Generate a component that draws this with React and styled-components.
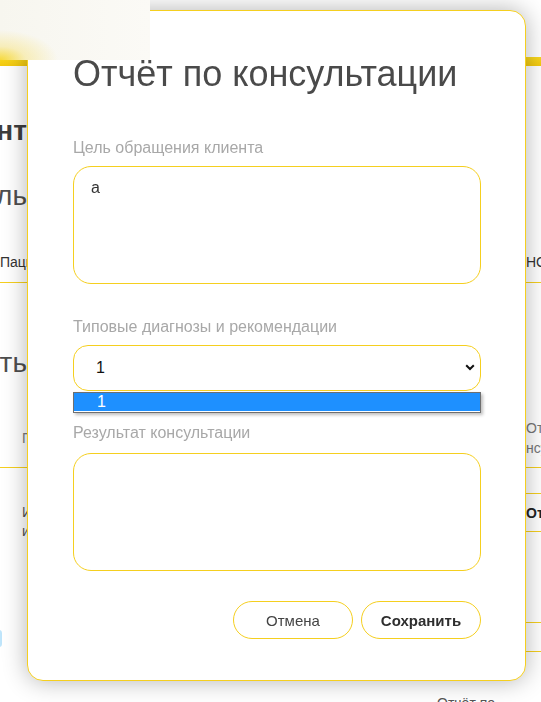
import React from "react";
import styled, { createGlobalStyle } from "styled-components";

const YELLOW = "#f5cf1f";

const GlobalStyle = createGlobalStyle`
  html, body { margin: 0; padding: 0; background: #fff; }
  body {
    font-family: "Liberation Sans", Arial, sans-serif;
    width: 541px;
    height: 702px;
    overflow: hidden;
  }
  * { box-sizing: border-box; }
`;

/* ---------- background page ---------- */

const Page = styled.div`
  width: 541px;
  height: 702px;
  overflow: hidden;
  background: #fff;
  display: flex;
  flex-direction: column;
`;

const Header = styled.header`
  display: flex;
  flex-direction: column;
  flex: none;
`;

const HeaderTop = styled.div`
  height: 57px;
  display: flex;
  align-items: flex-start;
`;

const Logo = styled.div`
  position: relative;
  z-index: 30;
  width: 150px;
  height: 60px;
  flex: none;
  background:
    radial-gradient(ellipse 58px 30px at 0% 100%, rgba(246, 214, 40, 0.9) 0%, rgba(247, 226, 120, 0.45) 45%, rgba(249, 246, 236, 0) 100%),
    linear-gradient(90deg, #f7f6ef 0%, #fbfaf6 100%);
`;

const HeaderBar = styled.div`
  height: 9px;
  background: linear-gradient(180deg, #f9d81f 0%, #f3c90e 100%);
`;

const BgRow = styled.div`
  flex: none;
  display: flex;
  justify-content: space-between;
  height: ${(p) => p.$h}px;
  margin-top: ${(p) => p.$mt || 0}px;
  border-bottom: ${(p) => (p.$line ? `1px solid ${YELLOW}` : "none")};
`;

const LeftCell = styled.div`
  width: 27px;
  flex: none;
  overflow: hidden;
  white-space: nowrap;
  display: flex;
  flex-direction: column;
  align-items: ${(p) => (p.$end ? "flex-end" : "flex-start")};
  padding-left: ${(p) => p.$pl || 0}px;
  padding-top: ${(p) => p.$pt || 0}px;
`;

const RightCell = styled.div`
  width: 15px;
  flex: none;
  overflow: hidden;
  white-space: nowrap;
  display: flex;
  flex-direction: column;
  padding-top: ${(p) => p.$pt || 0}px;
`;

const Heading = styled.div`
  font-size: 28px;
  line-height: 32px;
  font-weight: ${(p) => (p.$bold ? 700 : 400)};
  color: ${(p) => (p.$bold ? "#3d3d3d" : "#4e4e4e")};
`;

const BgText = styled.div`
  font-size: 14px;
  line-height: ${(p) => p.$lh || 16}px;
  font-weight: ${(p) => (p.$bold ? 700 : 400)};
  color: ${(p) => p.$color || "#333"};
`;

const TableBody = styled.div`
  flex: none;
  display: flex;
  justify-content: space-between;
`;

const Stack = styled.div`
  width: ${(p) => p.$w}px;
  flex: none;
  overflow: hidden;
  display: flex;
  flex-direction: column;
  padding-left: ${(p) => p.$pl || 0}px;
  padding-top: ${(p) => p.$pt || 0}px;
  white-space: nowrap;
`;

const StackRow = styled.div`
  height: ${(p) => p.$h}px;
  flex: none;
  display: flex;
  align-items: center;
  border-bottom: 1px solid ${YELLOW};
`;

const Tag = styled.div`
  margin-top: 89px;
  margin-left: -84px;
  width: 64px;
  height: 17px;
  flex: none;
  border-radius: 3px;
  background: #bfe5fb;
`;

const FooterText = styled.div`
  flex: none;
  margin-top: 43px;
  padding-left: 437px;
  font-size: 14px;
  line-height: 16px;
  color: #555;
  white-space: nowrap;
`;

/* ---------- modal ---------- */

const Modal = styled.div`
  position: fixed;
  left: 27px;
  top: 10px;
  z-index: 10;
  width: 499px;
  background: #fff;
  border: 1px solid ${YELLOW};
  border-radius: 16px;
  box-shadow: 0 0 24px rgba(0, 0, 0, 0.3);
  padding: 42px 44px 41px 45px;
  display: flex;
  flex-direction: column;
`;

const Title = styled.h2`
  margin: 0;
  font-size: 36px;
  line-height: 41px;
  font-weight: 400;
  color: #4a4a4a;
  white-space: nowrap;
`;

const Field = styled.div`
  display: flex;
  flex-direction: column;
  margin-top: ${(p) => p.$mt}px;
`;

const Label = styled.label`
  font-size: 16px;
  line-height: 18px;
  color: #a8a8a8;
  margin-bottom: ${(p) => p.$mb || 9}px;
`;

const TextArea = styled.textarea`
  width: 100%;
  height: 118px;
  border: 1px solid ${YELLOW};
  border-radius: 18px;
  padding: 11px 17px;
  font-family: "Liberation Sans", Arial, sans-serif;
  font-size: 16px;
  line-height: 19px;
  color: #333;
  resize: none;
  outline: none;
  background: #fff;
`;

const SelectWrap = styled.div`
  position: relative;
`;

const Select = styled.div`
  height: 46px;
  border: 1px solid ${YELLOW};
  border-radius: 15px;
  padding: 0 22px;
  display: flex;
  align-items: center;
  font-size: 16px;
  color: #111;
  background: #fff;
`;

const Chevron = styled.svg`
  position: absolute;
  right: 6px;
  top: 19px;
  width: 10px;
  height: 7px;
`;

const ListBox = styled.div`
  position: absolute;
  left: 0;
  right: 0;
  top: 47px;
  z-index: 5;
  background: #fff;
  border: 1px solid #6f6f6f;
  padding-bottom: 1px;
  box-shadow: 2px 2px 3px rgba(0, 0, 0, 0.25);
`;

const Option = styled.div`
  height: 18px;
  line-height: 18px;
  padding-left: 23px;
  font-size: 16px;
  color: #fff;
  background: #1e90ff;
`;

const Buttons = styled.div`
  display: flex;
  justify-content: flex-end;
  gap: 8px;
  margin-top: 30px;
`;

const Button = styled.button`
  width: 120px;
  height: 38px;
  border: 1px solid ${YELLOW};
  border-radius: 19px;
  background: #fff;
  font-family: "Liberation Sans", Arial, sans-serif;
  font-size: 15px;
  font-weight: ${(p) => (p.$primary ? 700 : 400)};
  color: ${(p) => (p.$primary ? "#2e2e2e" : "#444")};
  padding: 0;
  cursor: pointer;
`;

export default function App() {
  return (
    <>
      <GlobalStyle />
      <Page>
        <Header>
          <HeaderTop>
            <Logo />
          </HeaderTop>
          <HeaderBar />
        </Header>

        <BgRow $h={32} $mt={49}>
          <LeftCell $end>
            <Heading $bold>Консультант</Heading>
          </LeftCell>
        </BgRow>
        <BgRow $h={32} $mt={33}>
          <LeftCell $end>
            <Heading>Профиль</Heading>
          </LeftCell>
        </BgRow>
        <BgRow $h={29} $mt={42} $line>
          <LeftCell>
            <BgText>Пациенты</BgText>
          </LeftCell>
          <RightCell>
            <BgText>НС</BgText>
          </RightCell>
        </BgRow>
        <BgRow $h={32} $mt={64}>
          <LeftCell $end>
            <Heading>Отчётность</Heading>
          </LeftCell>
        </BgRow>
        <BgRow $h={53} $mt={36} $line>
          <LeftCell $pl={22} $pt={15}>
            <BgText $color="#7a7a7a">Пациент</BgText>
          </LeftCell>
          <RightCell $pt={3}>
            <BgText $color="#777" $lh={20}>Отчёт</BgText>
            <BgText $color="#777" $lh={20}>нсультации</BgText>
          </RightCell>
        </BgRow>

        <TableBody>
          <Stack $w={27} $pl={22} $pt={35}>
            <BgText $lh={19} $color="#555">Иванова</BgText>
            <BgText $lh={19} $color="#555">ирина</BgText>
            <Tag />
          </Stack>
          <Stack $w={15}>
            <StackRow $h={26} />
            <StackRow $h={38}>
              <BgText $bold $color="#222">Отчёт</BgText>
            </StackRow>
            <StackRow $h={91} />
            <StackRow $h={29} />
          </Stack>
        </TableBody>

        <FooterText>Отчёт по</FooterText>
      </Page>

      <Modal>
        <Title>Отчёт по консультации</Title>

        <Field $mt={45}>
          <Label>Цель обращения клиента</Label>
          <TextArea defaultValue="а" />
        </Field>

        <Field $mt={34}>
          <Label>Типовые диагнозы и рекомендации</Label>
          <SelectWrap>
            <Select>1</Select>
            <Chevron viewBox="0 0 10 7">
              <path d="M1.2 1.2 L5 5 L8.8 1.2" fill="none" stroke="#111" strokeWidth="2" />
            </Chevron>
            <ListBox>
              <Option>1</Option>
            </ListBox>
          </SelectWrap>
        </Field>

        <Field $mt={33}>
          <Label $mb={11}>Результат консультации</Label>
          <TextArea />
        </Field>

        <Buttons>
          <Button type="button">Отмена</Button>
          <Button type="button" $primary>
            Сохранить
          </Button>
        </Buttons>
      </Modal>
    </>
  );
}
